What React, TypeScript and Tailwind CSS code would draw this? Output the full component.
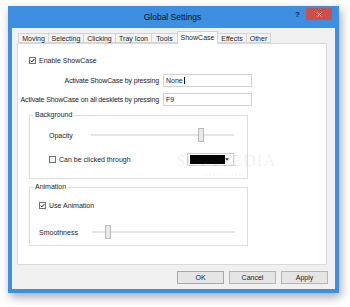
import type { ReactNode } from 'react';

const tabs = [
  { label: 'Moving', w: 'w-[30px]' },
  { label: 'Selecting', w: 'w-[35px]' },
  { label: 'Clicking', w: 'w-[32px]' },
  { label: 'Tray Icon', w: 'w-[36px]' },
  { label: 'Tools', w: 'w-[26px]' },
  { label: 'ShowCase', w: 'w-[41px]', active: true },
  { label: 'Effects', w: 'w-[28px]' },
  { label: 'Other', w: 'w-[25px]' },
];

function CheckBox({ checked }: { checked?: boolean }) {
  return (
    <span className="flex h-[7px] w-[7px] shrink-0 items-center justify-center border border-[#707070] bg-white">
      {checked && (
        <svg viewBox="0 0 8 8" className="h-[7px] w-[7px]">
          <path d="M1.2 4.2 L3.1 6.2 L6.9 1.6" fill="none" stroke="#111" strokeWidth="1.5" />
        </svg>
      )}
    </span>
  );
}

function Slider({ thumb, className }: { thumb: string; className: string }) {
  return (
    <div className={`relative flex h-[14px] items-center ${className}`}>
      <div className="h-[2px] w-full bg-[#e3e6e6]" />
      <div
        className={`absolute top-0 h-[14px] w-[6px] border border-[#b9b9b9] bg-[#e9e9e9] ${thumb}`}
      />
    </div>
  );
}

function Group({ title, className, children }: { title: string; className: string; children: ReactNode }) {
  return (
    <div className={`relative ml-[11px] w-[219px] border border-[#dcdcdc] ${className}`}>
      <span className="absolute -top-[5px] left-[3px] bg-white px-[2px] leading-[8px]">{title}</span>
      {children}
    </div>
  );
}

function Button({ children, primary }: { children: ReactNode; primary?: boolean }) {
  return (
    <div
      className={`flex h-[13px] w-[47px] items-center justify-center border bg-[#e5e5e5] ${
        primary ? 'border-[#7fb2e6]' : 'border-[#b4b4b4]'
      }`}
    >
      {children}
    </div>
  );
}

export default function App() {
  return (
    <div className="h-[307px] w-[350px] bg-white pl-[8px] pt-[6px] font-['Liberation_Sans',Arial,sans-serif] text-[7px] leading-none text-[#1b1b1b]">
      <div className="flex h-[287px] w-[331px] flex-col bg-[#3d8fe2] px-[4px] pb-[4px] shadow-[2px_4px_9px_rgba(0,0,0,0.35)]">
        {/* title bar */}
        <div className="grid h-[22px] grid-cols-[1fr_auto_1fr]">
          <div />
          <div className="flex items-center pr-[2px] text-[8.5px] text-[#111]">Global Settings</div>
          <div className="flex items-start justify-end pt-[2px] pr-[3px]">
            <span className="mt-[3px] mr-[6px] text-[8px] font-bold text-[#222]">?</span>
            <div className="flex h-[12px] w-[26px] items-center justify-center bg-[#c9504b]">
              <svg viewBox="0 0 8 8" className="h-[5px] w-[5px]">
                <path d="M1 1 L7 7 M7 1 L1 7" stroke="#fff" strokeWidth="1.6" />
              </svg>
            </div>
          </div>
        </div>

        {/* dialog body */}
        <div className="flex flex-1 flex-col bg-[#f0f0f0] pb-[5px] pl-[5px] pr-[8px] pt-[3px]">
          <div className="relative z-10 -mb-px ml-px flex h-[13px] items-end">
            {tabs.map((t, i) =>
              t.active ? (
                <div
                  key={t.label}
                  className={`flex h-[13px] ${t.w} items-start justify-center border border-b-0 border-[#d4d4d4] bg-white pt-[2px]`}
                >
                  {t.label}
                </div>
              ) : (
                <div
                  key={t.label}
                  className={`mb-px flex h-[10px] ${t.w} items-center justify-center border-y border-l border-[#d4d4d4] bg-[#f4f4f4] ${
                    i === tabs.length - 1 ? 'border-r' : ''
                  } ${tabs[i - 1]?.active ? 'border-l-0' : ''}`}
                >
                  {t.label}
                </div>
              ),
            )}
          </div>

          <div className="relative flex h-[222px] flex-col border border-[#d9d9d9] bg-white">
            <div className="ml-[11px] mt-[13px] flex h-[7px] items-center gap-[3px]">
              <CheckBox checked />
              <span>Enable ShowCase</span>
            </div>

            <div className="mt-[10px] grid grid-cols-[141px_89px] items-center gap-x-[4px] gap-y-[6px]">
              <span className="text-right tracking-[-0.14px]">Activate ShowCase by pressing</span>
              <div className="flex h-[13px] items-center border border-[#d2d2d2] px-[2px]">
                None<span className="ml-px h-[7px] w-px bg-[#111]" />
              </div>
              <span className="-ml-[2px] whitespace-nowrap text-right tracking-[-0.14px]">
                Activate ShowCase on all desklets by pressing
              </span>
              <div className="flex h-[13px] items-center border border-[#d2d2d2] px-[2px]">F9</div>
            </div>

            <Group title="Background" className="mt-[9px] h-[64px]">
              <div className="mt-[12px] flex items-center">
                <span className="ml-[19px] w-[42px]">Opacity</span>
                <Slider thumb="left-[107px]" className="w-[143px]" />
              </div>
              <div className="mt-[11px] flex h-[13px] items-center">
                <div className="ml-[19px] flex items-center gap-[3px]">
                  <CheckBox />
                  <span>Can be clicked through</span>
                </div>
                <div className="ml-auto mr-[13px] flex h-[13px] w-[47px] items-center border border-[#cfcfcf] bg-white pl-[2px] pr-[2px]">
                  <div className="h-[9px] w-[35px] bg-[#050505]" />
                  <svg viewBox="0 0 6 4" className="ml-auto mr-[2px] h-[3px] w-[4px]">
                    <path d="M0 0 H6 L3 4 Z" fill="#333" />
                  </svg>
                </div>
              </div>
            </Group>

            <Group title="Animation" className="mt-[8px] h-[59px]">
              <div className="ml-[9px] mt-[14px] flex h-[7px] items-center gap-[3px]">
                <CheckBox checked />
                <span>Use Animation</span>
              </div>
              <div className="mt-[16px] flex items-center">
                <span className="ml-[9px] w-[53px]">Smoothness</span>
                <Slider thumb="left-[13px]" className="w-[143px]" />
              </div>
            </Group>

            <div className="pointer-events-none absolute left-[158px] top-[108px] flex flex-col items-center text-[rgba(0,0,0,0.07)]">
              <span className="font-['Liberation_Serif',serif] text-[17px] tracking-[1px]">SOFTPEDIA</span>
              <span className="mt-[3px] text-[5px]">www.softpedia.com</span>
            </div>
          </div>

          <div className="-mr-px mt-[6px] flex justify-end gap-[5px]">
            <Button primary>OK</Button>
            <Button>Cancel</Button>
            <Button>Apply</Button>
          </div>
        </div>
      </div>
    </div>
  );
}
